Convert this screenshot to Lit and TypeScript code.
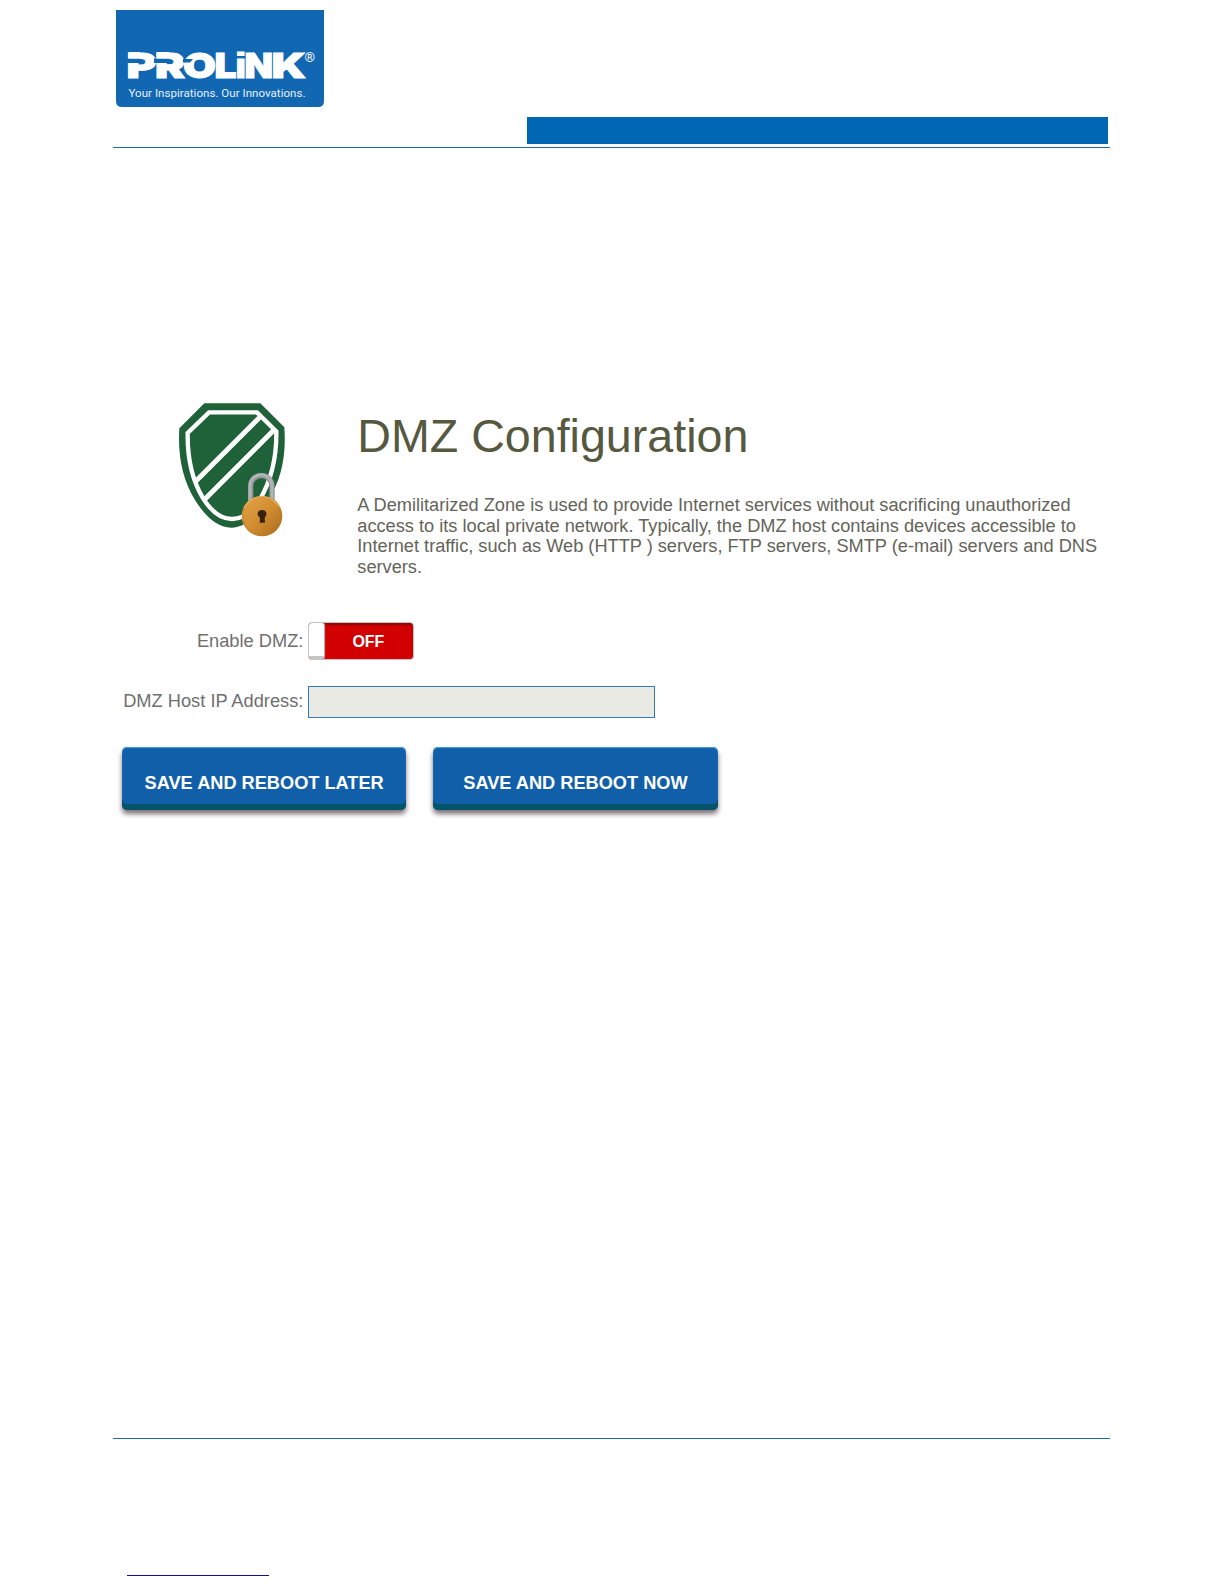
import { LitElement, html, svg, css } from "lit";
import { customElement, property } from "lit/decorators.js";

interface Letter { char: string; x: number; width: number; kind?: string; }

const LETTERS: Letter[] = [
  { char: "P", x: 10.5, width: 30 },
  { char: "R", x: 39, width: 30 },
  { char: "O", x: 67, width: 33 },
  { char: "L", x: 98.5, width: 22 },
  { char: "i", x: 118.5, width: 12.5, kind: "mark dot" },
  { char: "N", x: 128.5, width: 28.5 },
  { char: "K", x: 155.5, width: 34.5 },
];

@customElement("brand-logo")
class BrandLogo extends LitElement {
  static styles = css`
    :host { display: block; width: 208px; height: 97px; }
    .logo { display: block; }
    .mark { font: 900 34.5px Inter, sans-serif; fill: #fff; stroke: #fff; stroke-width: 1px; }
    .dot { font: bold 34.5px "Liberation Sans", sans-serif; }
    .reg { font: 13px Roboto, sans-serif; fill: #fff; }
    .tag { font: 11.5px Roboto, sans-serif; fill: #e4f1fc; }
  `;
  render() {
    return html`<svg class="logo" width="208" height="97" viewBox="0 0 208 97">
      <path d="M0 0H208V91Q208 97 202 97H6Q0 97 0 91Z" fill="#1267b3" />
      ${LETTERS.map((l) => svg`<text class=${l.kind ?? "mark"} x=${l.x} y="67.5" textLength=${l.width} lengthAdjust="spacingAndGlyphs">${l.char}</text>`)}
      <path d="M11 48.5H24V53H11ZM38 48.5H53V53H38Z" fill="#1267b3" />
      <path d="M67 49L77 49L74 52.5H67Z" fill="#1267b3" />
      <path d="M12.5 42H24V48.5H12.5ZM40.5 42H53V48.5H40.5Z" fill="#fff" />
      <text class="reg" x="188.5" y="52" textLength="10.5" lengthAdjust="spacingAndGlyphs">®</text>
      <text class="tag" x="12.5" y="87" textLength="177">Your Inspirations. Our Innovations.</text>
    </svg>`;
  }
}

@customElement("shield-icon")
class ShieldIcon extends LitElement {
  static styles = css`:host { display: block; width: 135px; height: 155px; } .icon { display: block; }`;
  render() {
    return html`<svg class="icon" width="135" height="155" viewBox="0 0 405 465">
      <defs>
        <linearGradient id="brass" x1="0" y1="0" x2="1" y2="1">
          <stop offset="0" stop-color="#e5a34a" /><stop offset=".5" stop-color="#d18e31" /><stop offset="1" stop-color="#a96a1c" />
        </linearGradient>
        <clipPath id="inner"><path d="M132 67H276L334 124C338 235 312 385 201 387C90 380 68 225 68 129Z" /></clipPath>
      </defs>
      <path d="M118 40H286L358 112C364 195 350 270 309 330C275 382 239 413 199 413C157 413 120 378 90 330C52 268 38 196 43 115Z" fill="#1f6139" />
      <path d="M132 67H276L334 124C335 195 322 265 285 328C262 364 235 387 201 387C165 387 137 362 113 323C78 264 67 193 68 129Z" fill="none" stroke="#fff" stroke-width="13" />
      <g clip-path="url(#inner)" stroke="#fff" stroke-width="15">
        <path d="M84 282L292 74M112 335L329 118" />
      </g>
      <path d="M257 335V289C257 246 321 246 321 289V335" fill="none" stroke="#919496" stroke-width="16" />
      <path d="M255 335V289C255 244 319 243 321 286V335" fill="none" stroke="#b1b4b6" stroke-width="9" />
      <circle cx="291" cy="378" r="61" fill="url(#brass)" />
      <circle cx="291" cy="378" r="57" fill="none" stroke="#b8782a" stroke-width="3" opacity=".55" />
      <path d="M237 352Q291 288 345 352" fill="none" stroke="#f4c57c" stroke-width="4" opacity=".6" />
      <path d="M285 383C273 375 277 360 291 360C306 360 308 375 299 383L300 398H284Z" fill="#3b2110" />
    </svg>`;
  }
}

@customElement("toggle-switch")
class ToggleSwitch extends LitElement {
  static styles = css`
    :host { display: block; }
    .track { box-sizing: border-box; display: flex; width: 105.5px; height: 38px; border: 1px solid #c9c3c3; border-radius: 4px; background: #d20000; box-shadow: inset 0 2px 2px #850808; overflow: hidden; }
    .knob { box-sizing: border-box; width: 14.5px; background: #fff; border-radius: 3px; border-bottom: 3px solid #c6c6c6; box-shadow: 0 0 1px 1px #c0b5b5; }
    .state { flex: 1; text-align: center; font: bold 16px/37px "Liberation Sans", sans-serif; color: #fff; }
  `;
  @property() label = "OFF";
  render() {
    return html`<div class="track"><div class="knob"></div><div class="state">${this.label}</div></div>`;
  }
}

@customElement("app-root")
class AppRoot extends LitElement {
  static styles = css`
    :host { display: block; }
    .page { box-sizing: border-box; width: 1224px; height: 1584px; padding: 10px 114px 0 113px; background: #fff; font-family: "Liberation Sans", Arial, sans-serif; display: flex; flex-direction: column; overflow: hidden; }
    .head { height: 137px; flex: none; border-bottom: 1px solid #1b6ba8; display: flex; flex-direction: column; }
    .logo { margin-left: 3px; }
    .band { width: 581px; height: 27px; margin: 10px 2px 0 auto; background: #0067b4; }
    .intro { display: flex; margin-top: 242px; height: 215px; }
    .icon { margin-left: 52px; }
    .copy { margin: 16px 0 0 57.3px; white-space: nowrap; }
    .title { margin: 0; font-size: 46.6px; line-height: 60px; font-weight: 400; color: #56583f; }
    .text { margin: 29px 0 0; font-size: 18.22px; line-height: 20.6px; color: #646459; }
    .field { display: flex; align-items: center; gap: 5px; height: 38px; margin-top: 17px; }
    .field + .field { margin-top: 23px; }
    .label { width: 190.4px; text-align: right; font-size: 18.25px; color: #6f6f6f; white-space: nowrap; }
    .field + .field .label { margin-top: -2px; }
    .input { box-sizing: border-box; width: 347px; height: 32px; border: 1px solid #3678b1; background: #e9eae3; border-radius: 0; padding: 0 8px; outline: none; }
    .actions { display: flex; gap: 27px; margin: 26px 0 0 9px; }
    .btn { width: 284.3px; height: 63px; padding: 9px 0 0; border: 0; border-radius: 5px; background: #115fa9; box-shadow: inset 0 -6px #03536b, inset 0 1px 1px #49a5d9, 0 4px 5px #7c7277; color: #fff; font: bold 18.2px "Liberation Sans", sans-serif; white-space: nowrap; }
    .foot { margin-top: 628px; border-top: 1px solid #1b6ba8; }
    .link { width: 142px; height: 1px; margin: 136px 0 0 14px; background: #101099; }
  `;
  render() {
    return html`<main class="page">
      <header class="head"><brand-logo class="logo"></brand-logo><div class="band"></div></header>
      <section class="intro">
        <shield-icon class="icon"></shield-icon>
        <div class="copy">
          <h1 class="title">DMZ Configuration</h1>
          <p class="text">A Demilitarized Zone is used to provide Internet services without sacrificing unauthorized<br />access to its local private network. Typically, the DMZ host contains devices accessible to<br />Internet traffic, such as Web (HTTP ) servers, FTP servers, SMTP (e-mail) servers and DNS<br />servers.</p>
        </div>
      </section>
      <div class="field"><span class="label">Enable DMZ:</span><toggle-switch></toggle-switch></div>
      <div class="field"><span class="label">DMZ Host IP Address:</span><input class="input" /></div>
      <div class="actions"><button class="btn">SAVE AND REBOOT LATER</button><button class="btn">SAVE AND REBOOT NOW</button></div>
      <footer class="foot"><div class="link"></div></footer>
    </main>`;
  }
}
